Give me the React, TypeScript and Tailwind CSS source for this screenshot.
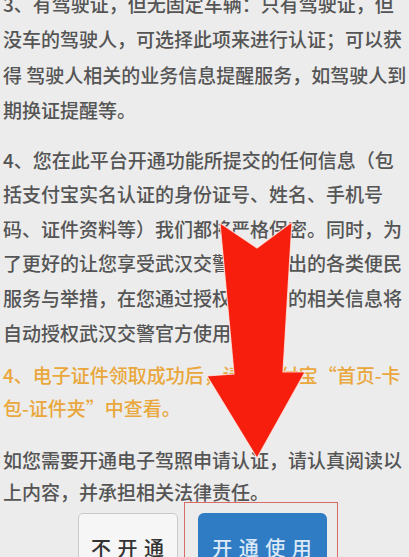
import React from "react";

const p3 = [
  "3、有驾驶证，但无固定车辆：只有驾驶证，但",
  "没车的驾驶人，可选择此项来进行认证；可以获",
  "得 驾驶人相关的业务信息提醒服务，如驾驶人到",
  "期换证提醒等。",
];
const p4 = [
  "4、您在此平台开通功能所提交的任何信息（包",
  "括支付宝实名认证的身份证号、姓名、手机号",
  "码、证件资料等）我们都将严格保密。同时，为",
  "了更好的让您享受武汉交警平台推出的各类便民",
  "服务与举措，在您通过授权后，您的相关信息将",
  "自动授权武汉交警官方使用。",
];
const p5 = ["4、电子证件领取成功后，请在支付宝“首页-卡", "包-证件夹”中查看。"];
const p6 = ["如您需要开通电子驾照申请认证，请认真阅读以", "上内容，并承担相关法律责任。"];

export default function App() {
  return (
    <div
      className="relative w-[409px] h-[557px] overflow-hidden bg-[#ececec]"
      style={{ fontFamily: '"Noto Sans CJK SC", "Noto Sans", sans-serif' }}
    >
      <div className="pl-[3px] text-[19px] font-medium text-[#555555]">
        <div className="mt-[-14px] leading-[35.3px]">
          {p3.map((l) => (
            <div key={l} className="whitespace-nowrap">{l}</div>
          ))}
        </div>
        <div className="mt-[15.5px] leading-[34.6px]">
          {p4.map((l) => (
            <div key={l} className="whitespace-nowrap">{l}</div>
          ))}
        </div>
        <div className="mt-[8px] leading-[33px] text-[#e9a73c]">
          {p5.map((l) => (
            <div key={l} className="whitespace-nowrap">{l}</div>
          ))}
        </div>
        <div className="mt-[19.5px] leading-[32px]">
          {p6.map((l) => (
            <div key={l} className="whitespace-nowrap">{l}</div>
          ))}
        </div>
      </div>

      <div className="mt-[5px] flex pl-[78px] gap-[20px]">
        <div className="w-[100px] h-[70px] rounded-[5px] border border-[#c9c9c9] bg-[#f6f6f6] flex items-center justify-center text-[20px] font-medium tracking-[1px] text-[#333333]">
          不 开 通
        </div>
        <div className="w-[129px] h-[70px] rounded-[6px] bg-[#2f7cc5] flex items-center justify-center text-[20px] font-medium tracking-[1px] text-[#dbe9f6]">
          开 通 使 用
        </div>
      </div>

      <div className="absolute left-[184px] top-[502px] w-[154px] h-[80px] border-[1.5px] border-[#d86b66]" />

      <svg className="absolute left-0 top-0" width="409" height="557" viewBox="0 0 409 557">
        <polygon
          points="220,223 257,248 292,222 283,372 305,372 257,458 207,376 234,374"
          fill="#f81e0d"
          stroke="rgba(255,235,230,0.8)"
          strokeWidth="1.2"
          strokeLinejoin="miter"
        />
      </svg>
    </div>
  );
}
